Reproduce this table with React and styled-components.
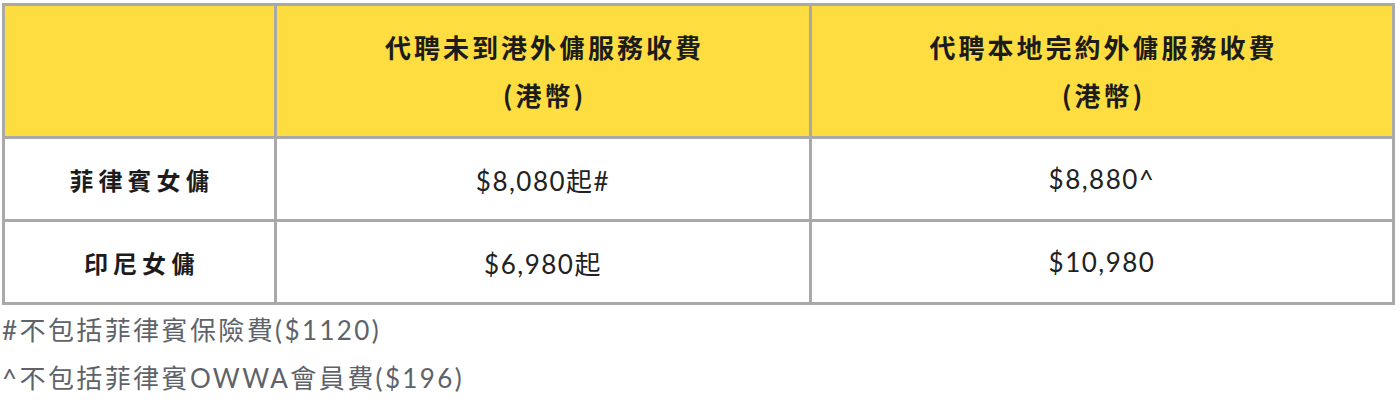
import styled, { createGlobalStyle } from 'styled-components'

const GlobalStyle = createGlobalStyle`
  body {
    margin: 0;
    background: #ffffff;
    font-family: Lato, "Noto Sans CJK TC", sans-serif;
  }
`

const rows = [
  { name: '菲律賓女傭', overseas: '$8,080起#', local: '$8,880^' },
  { name: '印尼女傭', overseas: '$6,980起', local: '$10,980' },
]

const notes = ['#不包括菲律賓保險費($1120)', '^不包括菲律賓OWWA會員費($196)']

export default function App() {
  return (
    <>
      <GlobalStyle />
      <Page>
        <FeeTable>
          <colgroup>
            <col style={{ width: 272 }} />
            <col style={{ width: 535 }} />
            <col />
          </colgroup>
          <thead>
            <tr>
              <HeadCell />
              <HeadCell>代聘未到港外傭服務收費<br />(港幣)</HeadCell>
              <HeadCell>代聘本地完約外傭服務收費<br />(港幣)</HeadCell>
            </tr>
          </thead>
          <tbody>
            {rows.map((r) => (
              <tr key={r.name}>
                <LabelCell>{r.name}</LabelCell>
                <PriceCell>{r.overseas}</PriceCell>
                <PriceCell>{r.local}</PriceCell>
              </tr>
            ))}
          </tbody>
        </FeeTable>
        <Notes>
          {notes.map((n) => (
            <Note key={n}>{n}</Note>
          ))}
        </Notes>
      </Page>
    </>
  )
}

const Page = styled.div`
  padding: 3px 5px 0 2px;
`

const FeeTable = styled.table`
  width: 100%;
  border-collapse: collapse;
  table-layout: fixed;
  border: 3px solid #a9a9a9;
`

const HeadCell = styled.th`
  background: #fedd40;
  border: 3px solid #a9a9a9;
  height: 130px;
  padding: 0 0 0 3px;
  font-family: "Noto Sans CJK TC", sans-serif;
  font-size: 26px;
  font-weight: 700;
  letter-spacing: 3px;
  line-height: 48px;
  color: #1c1c1c;
  text-align: center;
  vertical-align: middle;
`

const LabelCell = styled.td`
  border: 3px solid #a9a9a9;
  height: 80px;
  padding: 0 0 0 5px;
  font-family: "Noto Sans CJK TC", sans-serif;
  font-size: 24px;
  font-weight: 700;
  letter-spacing: 5px;
  color: #1c1c1c;
  text-align: center;
`

const PriceCell = styled.td`
  border: 3px solid #a9a9a9;
  height: 80px;
  padding: 0;
  font-family: Lato, "Noto Sans CJK TC", sans-serif;
  font-size: 26px;
  letter-spacing: 1.5px;
  color: #222222;
  text-align: center;
`

const Notes = styled.div`
  display: flex;
  flex-direction: column;
  padding-top: 1px;
`

const Note = styled.div`
  font-family: Lato, "Noto Sans CJK TC", sans-serif;
  font-size: 26px;
  line-height: 48px;
  letter-spacing: 2.4px;
  color: #5e6369;
`
